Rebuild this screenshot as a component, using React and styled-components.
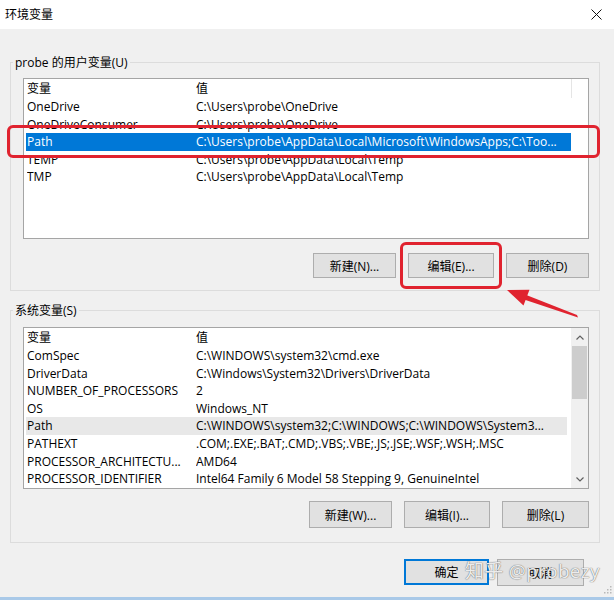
import React from "react";
import styled, { createGlobalStyle } from "styled-components";

const GlobalStyle = createGlobalStyle`
  html, body { margin: 0; padding: 0; background: #f0f0f0; }
  body {
    font-family: "Open Sans", "Noto Sans CJK SC", sans-serif;
    font-size: 12px;
    color: #000;
  }
  * { box-sizing: border-box; }
`;

const Window = styled.div`
  position: relative;
  width: 614px;
  height: 600px;
  background: #f0f0f0;
  display: flex;
  flex-direction: column;
  border-bottom: 3px solid #a9c9e8;
  overflow: hidden;
`;

const TitleBar = styled.div`
  height: 29px;
  flex-shrink: 0;
  background: #fff;
  display: flex;
  align-items: center;
  justify-content: space-between;
  padding: 0 12px 0 5px;
`;

const Title = styled.span`
  font-size: 12px;
  line-height: 16px;
`;

const Body = styled.div`
  display: flex;
  flex-direction: column;
  padding: 0 14px 0 10px;
`;

const Group = styled.fieldset`
  margin: ${(p) => p.$top}px 0 0 0;
  padding: 0 10px ${(p) => p.$bottom || 12}px 12px;
  border: 1px solid #dcdcdc;
  display: flex;
  flex-direction: column;
  min-width: 0;
`;

const Legend = styled.legend`
  margin-left: -10px;
  padding: 0 2px;
  font-size: 12px;
  line-height: 17px;
`;

const ListBox = styled.div`
  margin-top: ${(p) => p.$top}px;
  width: 566px;
  height: ${(p) => p.$h || 161}px;
  background: #fff;
  border: 1px solid #a5a5a5;
  display: flex;
  overflow: hidden;
`;

const ListBody = styled.div`
  flex: 1;
  min-width: 0;
  display: flex;
  flex-direction: column;
`;

const HeaderRow = styled.div`
  height: 19px;
  display: grid;
  grid-template-columns: 169px ${(p) => p.$valueW}px;
  padding-left: 3px;
  line-height: 19px;
`;

const HeaderCell = styled.div`
  white-space: nowrap;
  border-right: ${(p) => (p.$divider ? "1px solid #e5e5e5" : "none")};
`;

const Row = styled.div`
  height: 17.6px;
  line-height: 17.6px;
  margin-left: 2px;
  width: ${(p) => p.$w}px;
  padding-left: 1px;
  display: grid;
  grid-template-columns: 169px 1fr;
  white-space: nowrap;
  background: ${(p) => (p.$selected ? "#0078d7" : p.$hover ? "#e8e8e8" : "transparent")};
  color: ${(p) => (p.$selected ? "#fff" : "#000")};
`;

const Cell = styled.div`
  overflow: hidden;
  white-space: nowrap;
`;

const ScrollBar = styled.div`
  width: 17px;
  flex-shrink: 0;
  background: #f0f0f0;
  display: flex;
  flex-direction: column;
`;

const ScrollArrow = styled.div`
  height: 18px;
  display: flex;
  align-items: center;
  justify-content: center;
`;

const Track = styled.div`
  flex: 1;
  display: flex;
  flex-direction: column;
  padding: 0 1px;
`;

const Thumb = styled.div`
  height: 53px;
  background: #cdcdcd;
`;

const ButtonRow = styled.div`
  margin-top: ${(p) => p.$top}px;
  display: flex;
  justify-content: flex-end;
  gap: ${(p) => p.$gap}px;
  padding-right: ${(p) => p.$right || 0}px;
`;

const Button = styled.button`
  width: ${(p) => p.$w || 83}px;
  height: ${(p) => p.$h || 25}px;
  background: #e1e1e1;
  border: 1px solid ${(p) => (p.$default ? "#0078d7" : "#adadad")};
  box-shadow: ${(p) => (p.$default ? "inset 0 0 0 1px #0078d7" : "none")};
  font-family: "Open Sans", "Noto Sans CJK SC", sans-serif;
  font-size: 12px;
  color: #000;
  padding: 0;
  border-radius: 0;
`;

const RedBox = styled.div`
  position: absolute;
  left: ${(p) => p.$x}px;
  top: ${(p) => p.$y}px;
  width: ${(p) => p.$w}px;
  height: ${(p) => p.$h}px;
  border: 3px solid #e0232f;
  border-radius: 6px;
  pointer-events: none;
`;

const Arrow = styled.svg`
  position: absolute;
  left: 500px;
  top: 280px;
  overflow: visible;
`;

const Watermark = styled.div`
  position: absolute;
  left: 465px;
  top: 558px;
  font-family: "Open Sans", "Noto Sans CJK SC", sans-serif;
  font-size: 19px;
  line-height: 26px;
  color: rgba(255, 255, 255, 0.9);
  text-shadow: 0 0 1px rgba(90, 90, 90, 0.9), 0 0 1px rgba(90, 90, 90, 0.6);
  white-space: nowrap;
  letter-spacing: 0.3px;
`;

const Grip = styled.svg`
  position: absolute;
  right: 2px;
  bottom: 3px;
`;

const userVars = [
  ["OneDrive", "C:\\Users\\probe\\OneDrive"],
  ["OneDriveConsumer", "C:\\Users\\probe\\OneDrive"],
  ["Path", "C:\\Users\\probe\\AppData\\Local\\Microsoft\\WindowsApps;C:\\Too..."],
  ["TEMP", "C:\\Users\\probe\\AppData\\Local\\Temp"],
  ["TMP", "C:\\Users\\probe\\AppData\\Local\\Temp"],
];

const sysVars = [
  ["ComSpec", "C:\\WINDOWS\\system32\\cmd.exe"],
  ["DriverData", "C:\\Windows\\System32\\Drivers\\DriverData"],
  ["NUMBER_OF_PROCESSORS", "2"],
  ["OS", "Windows_NT"],
  ["Path", "C:\\WINDOWS\\system32;C:\\WINDOWS;C:\\WINDOWS\\System3..."],
  ["PATHEXT", ".COM;.EXE;.BAT;.CMD;.VBS;.VBE;.JS;.JSE;.WSF;.WSH;.MSC"],
  ["PROCESSOR_ARCHITECTU...", "AMD64"],
  ["PROCESSOR_IDENTIFIER", "Intel64 Family 6 Model 58 Stepping 9, GenuineIntel"],
];

const Chevron = ({ up }) => (
  <svg width="8" height="5" viewBox="0 0 8 5">
    <polyline
      points={up ? "0.5,4.5 4,1 7.5,4.5" : "0.5,0.5 4,4 7.5,0.5"}
      fill="none"
      stroke="#606060"
      strokeWidth="1.2"
    />
  </svg>
);

export default function App() {
  return (
    <>
      <GlobalStyle />
      <Window>
        <TitleBar>
          <Title>环境变量</Title>
          <svg width="11" height="11" viewBox="0 0 11 11">
            <path d="M0.5 0.5 L10.5 10.5 M10.5 0.5 L0.5 10.5" stroke="#111" strokeWidth="1" />
          </svg>
        </TitleBar>
        <Body>
          <Group $top={25}>
            <Legend>probe 的用户变量(U)</Legend>
            <ListBox $top={7}>
              <ListBody>
                <HeaderRow $valueW={376}>
                  <HeaderCell>变量</HeaderCell>
                  <HeaderCell $divider>值</HeaderCell>
                </HeaderRow>
                {userVars.map(([n, v]) => (
                  <Row key={n} $w={545} $selected={n === "Path"}>
                    <Cell>{n}</Cell>
                    <Cell>{v}</Cell>
                  </Row>
                ))}
              </ListBody>
            </ListBox>
            <ButtonRow $top={14} $gap={12}>
              <Button>新建(N)...</Button>
              <Button $w={86}>编辑(E)...</Button>
              <Button>删除(D)</Button>
            </ButtonRow>
          </Group>

          <Group $top={11} $bottom={14}>
            <Legend>系统变量(S)</Legend>
            <ListBox $top={8} $h={162}>
              <ListBody>
                <HeaderRow $valueW={376}>
                  <HeaderCell>变量</HeaderCell>
                  <HeaderCell>值</HeaderCell>
                </HeaderRow>
                {sysVars.map(([n, v]) => (
                  <Row key={n} $w={541} $hover={n === "Path"}>
                    <Cell>{n}</Cell>
                    <Cell>{v}</Cell>
                  </Row>
                ))}
              </ListBody>
              <ScrollBar>
                <ScrollArrow>
                  <Chevron up />
                </ScrollArrow>
                <Track>
                  <Thumb />
                </Track>
                <ScrollArrow>
                  <Chevron />
                </ScrollArrow>
              </ScrollBar>
            </ListBox>
            <ButtonRow $top={12} $gap={12}>
              <Button $h={27}>新建(W)...</Button>
              <Button $h={27} $w={86}>编辑(I)...</Button>
              <Button $h={27} $w={87}>删除(L)</Button>
            </ButtonRow>
          </Group>

          <ButtonRow $top={16} $gap={8} $right={16}>
            <Button $w={85} $h={26} $default>
              确定
            </Button>
            <Button $w={87} $h={27}>
              取消
            </Button>
          </ButtonRow>
        </Body>

        <RedBox $x={7} $y={125} $w={593} $h={33} />
        <RedBox $x={400} $y={242} $w={102} $h={47} />
        <Arrow width="85" height="45" viewBox="0 0 85 45">
          <polygon points="77,35 78,37.5 24,19.5 25,14.5" fill="#e0232f" />
          <polygon points="7,10 29.5,9.8 23.5,25.5" fill="#e0232f" />
        </Arrow>
        <Watermark>知乎 @probezy</Watermark>
        <Grip width="10" height="10" viewBox="0 0 10 10">
          <g fill="#b8b8b8">
            <rect x="8" y="2" width="1.5" height="1.5" />
            <rect x="5" y="5" width="1.5" height="1.5" />
            <rect x="8" y="5" width="1.5" height="1.5" />
            <rect x="2" y="8" width="1.5" height="1.5" />
            <rect x="5" y="8" width="1.5" height="1.5" />
            <rect x="8" y="8" width="1.5" height="1.5" />
          </g>
        </Grip>
      </Window>
    </>
  );
}
